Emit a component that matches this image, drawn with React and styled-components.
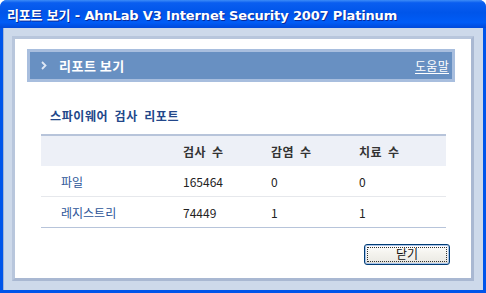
import React from 'react'
import styled, { createGlobalStyle } from 'styled-components'

const GlobalStyle = createGlobalStyle`
  html, body {
    margin: 0;
    padding: 0;
    background: #ffffff;
  }
  body {
    font-family: "Noto Sans CJK KR", "DejaVu Sans", sans-serif;
  }
`

const Window = styled.div`
  width: 486px;
  height: 293px;
  display: flex;
  flex-direction: column;
  background: #0055ea;
  border-radius: 7px 7px 0 0;
  overflow: hidden;
  box-sizing: border-box;
`

const TitleBar = styled.div`
  height: 28px;
  flex: none;
  display: flex;
  align-items: center;
  padding-left: 7px;
  background: linear-gradient(to bottom, #3d8cf7 0%, #0a5ef0 10%, #0055ea 45%, #005cf6 80%, #0049da 100%);
  color: #ffffff;
  font-family: "DejaVu Sans", "Noto Sans CJK KR", sans-serif;
  font-weight: bold;
  font-size: 13px;
  letter-spacing: -0.15px;
  text-shadow: 1px 1px 0 #0a2a9a;
  white-space: nowrap;
`

const Client = styled.div`
  flex: 1;
  display: flex;
  margin: 0 3px 3px 3px;
  padding: 8px 9px 9px 8px;
  background: #cdd9ea;
  border-left: 1px solid #9fb4d8;
`

const Panel = styled.div`
  flex: 1;
  display: flex;
  flex-direction: column;
  background: #ffffff;
  border: 3px solid #a9b8d2;
  border-top-color: #b8c6dc;
  border-left-color: #b8c6dc;
  padding: 10px 16px 0 12px;
`

const HeaderBar = styled.div`
  height: 27px;
  display: flex;
  align-items: center;
  background: #6890c2;
  border: 3px solid #a8bede;
  color: #ffffff;
  padding: 0 3px 0 11px;
`

const Chevron = styled.svg`
  width: 6px;
  height: 9px;
  margin-right: 12px;
`

const HeaderTitle = styled.span`
  font-size: 13px;
  font-weight: bold;
  letter-spacing: 0.5px;
  flex: 1;
`

const HelpLink = styled.a`
  font-size: 12px;
  color: #ffffff;
  text-decoration: underline;
  text-underline-offset: 2px;
  letter-spacing: 0.3px;
  cursor: pointer;
`

const SectionTitle = styled.h3`
  margin: 26px 0 0 23px;
  font-size: 12px;
  font-weight: bold;
  color: #22478a;
  letter-spacing: 0.6px;
  word-spacing: 3px;
  line-height: 16px;
`

const Table = styled.div`
  margin: 10px 9px 0 14px;
  border-top: 2px solid #b7c4da;
  border-bottom: 1px solid #b7c4da;
`

const Row = styled.div`
  display: grid;
  grid-template-columns: 142px 88px 88px 1fr;
  height: 30px;
  align-items: center;
  background: ${p => (p.$head ? '#edf0f7' : '#ffffff')};
  border-top: ${p => (p.$first || p.$head ? 'none' : '1px solid #e6e8ec')};
  font-size: 12px;
  color: #222222;
`

const Cell = styled.div`
  padding-left: ${p => (p.$label ? '20px' : '0')};
  font-weight: ${p => (p.$head ? 'bold' : 'normal')};
  color: ${p => (p.$label ? '#2c5598' : p.$head ? '#333333' : '#222222')};
  word-spacing: 3px;
  letter-spacing: ${p => (p.$head ? '0.4px' : '0')};
`

const Footer = styled.div`
  display: flex;
  justify-content: flex-end;
  margin-top: auto;
  padding: 0 5px 13px 0;
`

const Button = styled.button`
  width: 86px;
  height: 21px;
  padding: 0 0 2px 0;
  display: flex;
  align-items: center;
  justify-content: center;
  border: 1px solid #003c74;
  border-radius: 3px;
  background: linear-gradient(to bottom, #ffffff 0%, #f5f4ef 40%, #ecebe5 85%, #d8d4c8 100%);
  box-shadow: inset 0 0 0 1px #a9c4ec;
  font-family: "Noto Sans CJK KR", sans-serif;
  font-size: 12px;
  line-height: 14px;
  color: #111111;
  position: relative;
  cursor: pointer;

  &::after {
    content: '';
    position: absolute;
    inset: 2px;
    border: 1px dotted #333333;
  }
`

const rows = [
  { name: '파일', scan: '165464', infected: '0', cured: '0' },
  { name: '레지스트리', scan: '74449', infected: '1', cured: '1' },
]

export default function App() {
  return (
    <>
      <GlobalStyle />
      <Window>
        <TitleBar>리포트 보기 - AhnLab V3 Internet Security 2007 Platinum</TitleBar>
        <Client>
          <Panel>
            <HeaderBar>
              <Chevron viewBox="0 0 6 9">
                <path d="M1 1 L4.5 4.5 L1 8" stroke="#dfe8f5" strokeWidth="1.8" fill="none" />
              </Chevron>
              <HeaderTitle>리포트 보기</HeaderTitle>
              <HelpLink>도움말</HelpLink>
            </HeaderBar>
            <SectionTitle>스파이웨어 검사 리포트</SectionTitle>
            <Table>
              <Row $head>
                <Cell />
                <Cell $head>검사 수</Cell>
                <Cell $head>감염 수</Cell>
                <Cell $head>치료 수</Cell>
              </Row>
              {rows.map((r, i) => (
                <Row key={r.name} $first={i === 0}>
                  <Cell $label>{r.name}</Cell>
                  <Cell>{r.scan}</Cell>
                  <Cell>{r.infected}</Cell>
                  <Cell>{r.cured}</Cell>
                </Row>
              ))}
            </Table>
            <Footer>
              <Button>닫기</Button>
            </Footer>
          </Panel>
        </Client>
      </Window>
    </>
  )
}
